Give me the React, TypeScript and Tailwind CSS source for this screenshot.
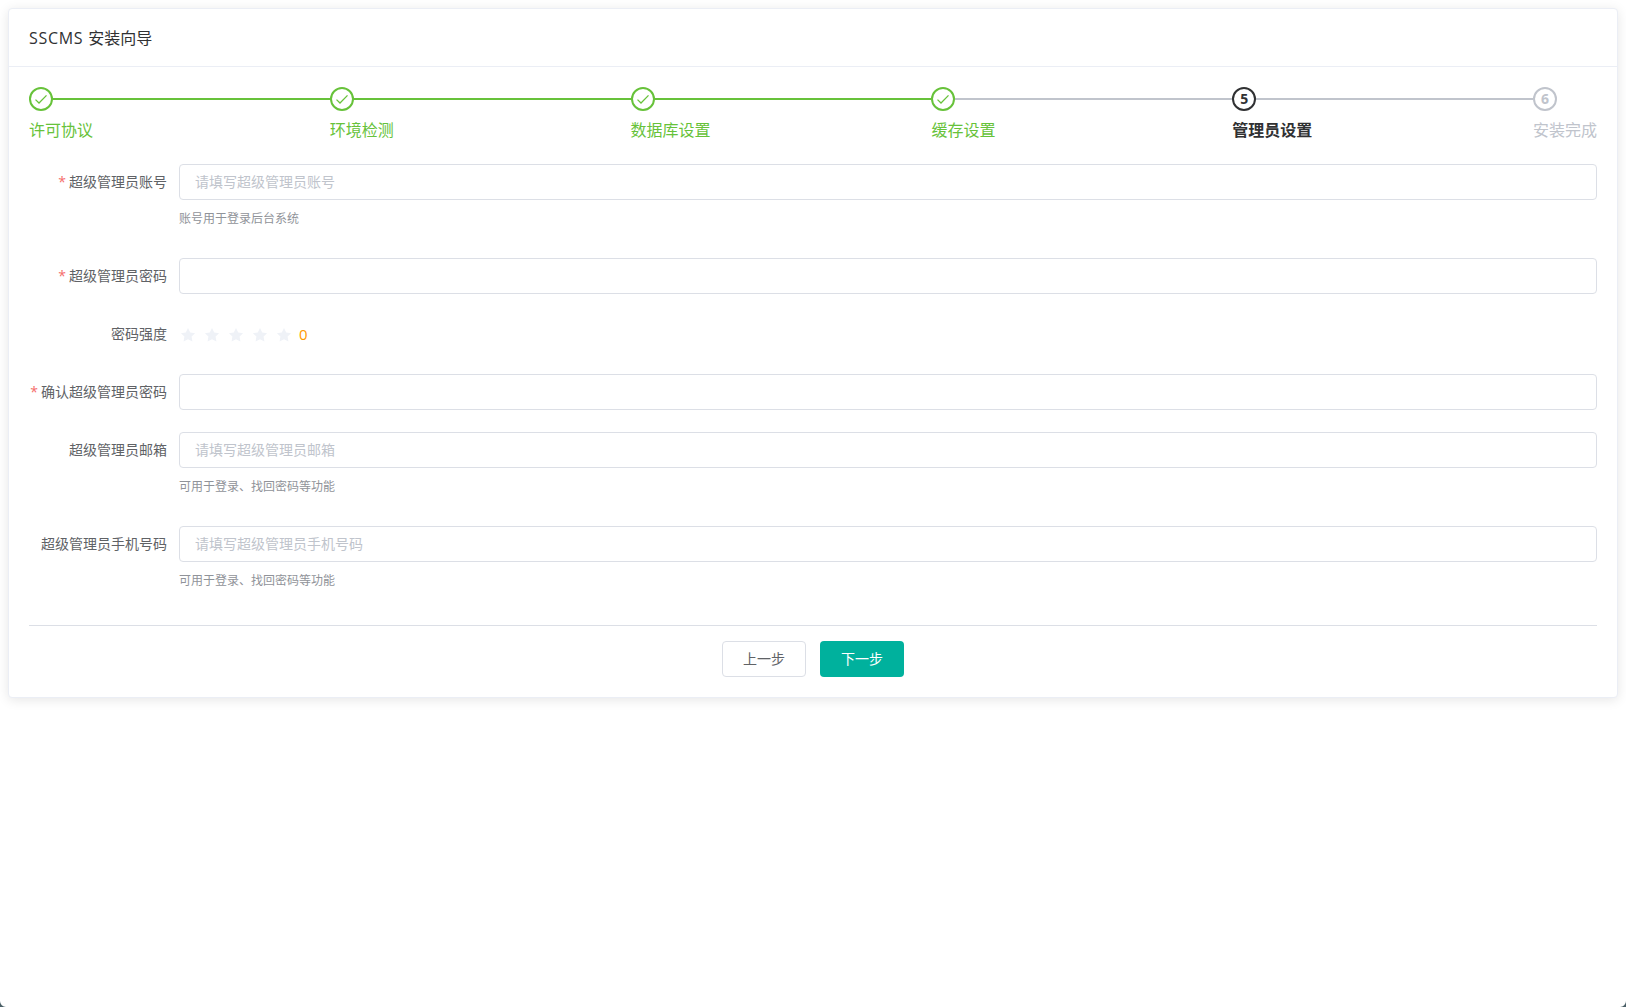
const FONT = "font-['Open_Sans','Noto_Sans_CJK_SC',sans-serif]";

function CheckIcon() {
  return (
    <svg width="16" height="16" viewBox="0 0 16 16" fill="none" className="text-[#67c23a]">
      <path d="M2.5 8.6 L6 12 L13.5 4.4" stroke="currentColor" strokeWidth="1.3" />
    </svg>
  );
}

type Step = { title: string; status: 'done' | 'active' | 'wait'; num: number };
const steps: Step[] = [
  { title: '许可协议', status: 'done', num: 1 },
  { title: '环境检测', status: 'done', num: 2 },
  { title: '数据库设置', status: 'done', num: 3 },
  { title: '缓存设置', status: 'done', num: 4 },
  { title: '管理员设置', status: 'active', num: 5 },
  { title: '安装完成', status: 'wait', num: 6 },
];

function StepItem({ s, last }: { s: Step; last: boolean }) {
  const circle =
    s.status === 'done'
      ? 'border-[#67c23a] text-[#67c23a]'
      : s.status === 'active'
        ? 'border-[#303133] text-[#303133]'
        : 'border-[#c0c4cc] text-[#c0c4cc]';
  const title =
    s.status === 'done'
      ? 'text-[#67c23a]'
      : s.status === 'active'
        ? 'text-[#303133] font-bold'
        : 'text-[#c0c4cc]';
  return (
    <div className={last ? 'shrink-0 w-[64px]' : 'flex-1 min-w-0'}>
      <div className="relative h-6">
        {!last && (
          <div className={`absolute left-0 right-0 top-[11px] h-0.5 ${s.num < 4 ? 'bg-[#67c23a]' : 'bg-[#c0c4cc]'}`} />
        )}
        <div className={`relative w-6 h-6 rounded-full border-2 bg-white flex items-center justify-center text-sm font-bold ${circle}`}>
          {s.status === 'done' ? <CheckIcon /> : s.num}
        </div>
      </div>
      <div className={`text-base leading-[38px] h-[38px] whitespace-nowrap ${title}`}>{s.title}</div>
    </div>
  );
}

function Field({ label, required, placeholder, help }: { label: string; required?: boolean; placeholder?: string; help?: string }) {
  return (
    <div className="flex mb-[22px]">
      <label className="w-[150px] pr-3 shrink-0 text-right text-sm leading-9 text-[#606266]">
        {required && <span className="text-[#f56c6c] mr-[3px]">*</span>}
        {label}
      </label>
      <div className="flex-1 min-w-0">
        <input
          placeholder={placeholder}
          className="block w-full h-9 px-[15px] pb-[2px] border border-[#dcdfe6] rounded text-sm text-[#606266] bg-white outline-none placeholder:text-[#c0c4cc]"
        />
        {help && <div className="text-xs leading-9 h-9 pt-px -mb-[22px] text-[#909399]">{help}</div>}
      </div>
    </div>
  );
}

function Corner({ className, flip }: { className: string; flip?: boolean }) {
  return (
    <svg width="6" height="6" viewBox="0 0 6 6" className={`absolute bottom-0 ${className}`}>
      <path d={flip ? 'M6 0 A6 6 0 0 1 0 6 H6 Z' : 'M0 0 A6 6 0 0 0 6 6 H0 Z'} fill="#4a5f66" />
    </svg>
  );
}

export default function App() {
  return (
    <div className={`min-h-[1007px] bg-white p-[8px] relative ${FONT}`}>
      <div className="rounded border border-[#ebeef5] bg-white shadow-[0_2px_12px_0_rgba(0,0,0,0.1)] text-[#303133]">
        <div className="h-[58px] px-[20px] flex items-center border-b border-[#ebeef5] text-base">
          <span className="tracking-[0.7px]">SSCMS&nbsp;</span>安装向导
        </div>
        <div className="px-[20px] pt-[20px] pb-[20px]">
          <div className="flex h-[77px]">
            {steps.map((s, i) => (
              <StepItem key={s.title} s={s} last={i === steps.length - 1} />
            ))}
          </div>
          <Field label="超级管理员账号" required placeholder="请填写超级管理员账号" help="账号用于登录后台系统" />
          <div className="h-[22px]" />
          <Field label="超级管理员密码" required />
          <div className="flex mb-[22px] h-9 items-center">
            <div className="w-[150px] pr-3 shrink-0 text-right text-sm text-[#606266]">密码强度</div>
            <div className="flex items-center">
              {[0, 1, 2, 3, 4].map((i) => (
                <svg key={i} width="18" height="18" viewBox="0 0 24 24" className="mr-[6px] mt-px text-[#eff2f7]" fill="currentColor">
                  <path d="M12 2.5 L15 8.6 L21.5 9.5 L16.8 14.1 L17.9 20.6 L12 17.5 L6.1 20.6 L7.2 14.1 L2.5 9.5 L9 8.6 Z" />
                </svg>
              ))}
              <span className="text-[15px] text-[#ff9900]">0</span>
            </div>
          </div>
          <Field label="确认超级管理员密码" required />
          <Field label="超级管理员邮箱" placeholder="请填写超级管理员邮箱" help="可用于登录、找回密码等功能" />
          <div className="h-[22px]" />
          <Field label="超级管理员手机号码" placeholder="请填写超级管理员手机号码" help="可用于登录、找回密码等功能" />
          <div className="h-[9px]" />
          <div className="border-t border-[#dcdfe6] mt-[18px]" />
          <div className="flex justify-center gap-[14px] pt-[15px]">
            <button className="w-[84px] h-9 rounded border border-[#dcdfe6] bg-white text-sm text-[#606266]">上一步</button>
            <button className="w-[84px] h-9 rounded bg-[#00b19d] text-sm text-white">下一步</button>
          </div>
        </div>
      </div>
      <Corner className="left-0" />
      <Corner className="right-0" flip />
    </div>
  );
}
